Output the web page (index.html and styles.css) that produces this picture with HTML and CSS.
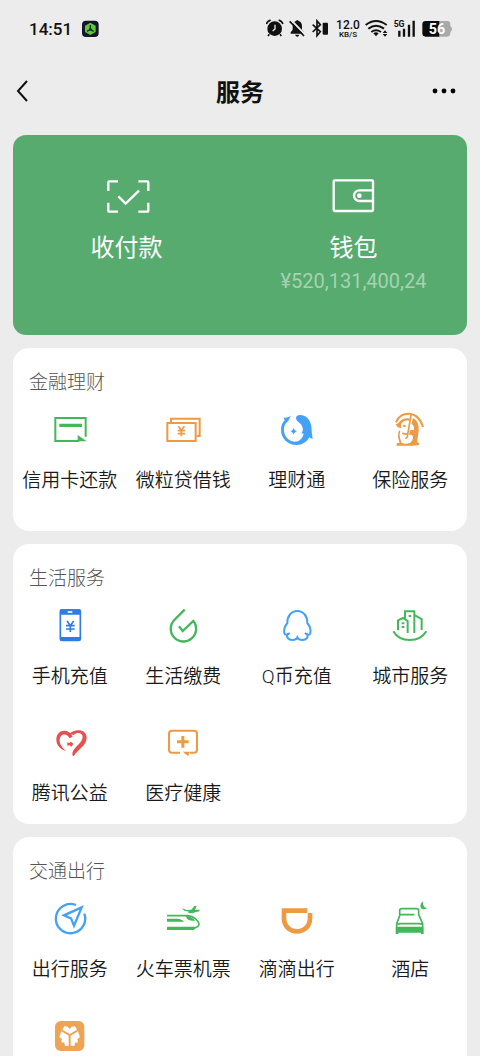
FILE: index.html
```html
<!DOCTYPE html>
<html lang="zh-CN">
<head>
<meta charset="utf-8">
<meta name="viewport" content="width=device-width, initial-scale=1">
<title>服务</title>
<link rel="stylesheet" href="styles.css">
</head>
<body>
<div class="screen">
  <div class="status">
    <div class="status-left">
      <span class="time">14:51</span>
      <svg class="w17" viewBox="243 51 51 72" aria-hidden="true"><rect x="243" y="62" width="50" height="49" rx="12" fill="#15152c"/><path d="M268 68l16 9v19l-16 9-16-9V77z" fill="#5cc83c"/><path d="M268 75v13l-10 6M268 88l10 6" fill="none" stroke="#17321c" stroke-width="4"/><circle cx="268" cy="88" r="4" fill="#17321c"/></svg>
    </div>
    <div class="status-right">
      <svg class="w18" viewBox="48 51 54 72" aria-hidden="true"><circle cx="74" cy="86" r="22" fill="#111"/><path d="M50 70q3-7 10-9M98 70q-3-7-10-9" fill="none" stroke="#111" stroke-width="5" stroke-linecap="round"/><path d="M58 103l-4 5M90 103l4 5" stroke="#111" stroke-width="5"/><path d="M75 74v13l-7 6" fill="none" stroke="#ececec" stroke-width="4"/></svg>
      <svg class="w17" viewBox="117 51 51 72" aria-hidden="true"><path d="M122 101v-4l6-8V79q1-14 11-16v-2h6v2q11 2 11 16v10l6 8v4z" fill="#111"/><path d="M135 104h13q-2 6-6 6t-7-6z" fill="#111"/><path d="M124 61l43 44" stroke="#ececec" stroke-width="6"/><path d="M119 64l43 44" stroke="#111" stroke-width="5"/></svg>
      <svg class="w20" viewBox="183 51 60 72" aria-hidden="true"><path d="M188 74l23 21-10 12V63l10 11-23 22" fill="none" stroke="#111" stroke-width="5"/><rect x="218" y="68" width="16" height="36" rx="3" fill="#111"/></svg>
      <span class="speed"><span class="speed-num">12.0</span><span class="speed-unit">KB/S</span></span>
      <svg class="w24" viewBox="345 51 72 72" aria-hidden="true"><g fill="none" stroke="#111" stroke-width="6"><path d="M347 75q31-24 63 0"/><path d="M355 86q23-18 47 0"/><path d="M364 96q14-10 29 0"/></g><path d="M370 100q8-6 16 0l-8 9z" fill="#111"/><path d="M405 91l7 8h-14zM405 110l7-8h-14z" fill="#111"/></svg>
      <svg class="w23" viewBox="432 51 69 72" aria-hidden="true"><text class="tag-5g" x="431" y="80">5G</text><path d="M448 92v18M462 86v24M477 74v36M491 62v48" stroke="#111" stroke-width="7"/></svg>
      <svg class="w31" viewBox="516 51 93 72" aria-hidden="true"><path d="M568 63h23q10 0 10 10v5q5 3 5 9t-5 9v4q0 10-10 10h-23z" fill="#a9a9a9"/><path d="M568 63h-41q-10 0-10 10v27q0 10 10 10h41z" fill="#0c0c0c"/><text class="tag-batt" x="561" y="102">56</text></svg>
    </div>
  </div>

  <header class="nav">
    <button class="nav-btn" aria-label="返回"><svg class="w24" viewBox="0 0 24 24"><path d="M19 2L10 12l9 10" fill="none" stroke="#111" stroke-width="2"/></svg></button>
    <h1 class="nav-title">服务</h1>
    <button class="nav-btn" aria-label="更多"><svg class="w24" viewBox="0 0 24 24"><circle cx="3" cy="12" r="2.4"/><circle cx="12" cy="12" r="2.4"/><circle cx="21" cy="12" r="2.4"/></svg></button>
  </header>

  <main class="content">
    <section class="wallet">
      <a class="wallet-item" href="#">
        <svg class="wallet-icon" viewBox="128 81 144 120" aria-hidden="true"><g fill="none" stroke="#fff" stroke-width="7"><path d="M144 123V97q0-3 3-3h26M234 94h27q3 0 3 3v26M264 158v24q0 3-3 3h-27M173 185h-26q-3 0-3-3v-24M174 139l22 22 40-39"/></g></svg>
        <span class="wallet-label">收付款</span>
      </a>
      <a class="wallet-item" href="#">
        <svg class="wallet-icon" viewBox="808 81 144 120" aria-hidden="true"><g fill="none" stroke="#fff" stroke-width="7"><rect x="819" y="91" width="118" height="92" rx="3"/><path d="M937 121h-41a16 16 0 0 0 0 32h41"/></g><circle cx="896" cy="137" r="7" fill="#fff"/></svg>
        <span class="wallet-label">钱包</span>
        <span class="wallet-amount">¥520,131,400,24</span>
      </a>
    </section>

    <section class="card card-roomy">
      <h2 class="card-title">金融理财</h2>
      <div class="grid">
        <a class="item" href="#"><svg class="icon green" viewBox="119 195 120 120" aria-hidden="true"><path d="M226 275V219h-91v69h72" class="line"/><path d="M147 236h68v10h-68zM202 270l27 19h-27z" class="solid"/></svg><span class="label">信用卡还款</span></a>
        <a class="item" href="#"><svg class="icon orange" viewBox="460 195 120 120" aria-hidden="true"><g class="line"><rect x="473" y="234" width="85" height="54"/><path d="M484 231v-10h86v52h-9"/><path d="M506 244l9 12 9-12M515 256v18M504 257h22M504 266h22" stroke-width="5"/></g></svg><span class="label">微粒贷借钱</span></a>
        <a class="item" href="#"><svg class="icon blue" viewBox="110 195 120 120" aria-hidden="true"><path class="solid" d="M152 212C147 219 146 224 143 229C132 237 130 249 131 258C133 277 147 289 162 290C177 290 187 280 190 266L183 265C190 257 188 247 182 238C177 232 167 228 167 219C167 212 174 209 181 210C203 212 215 232 214 258C214 266 216 272 217 283L207 277C199 291 186 300 169 300C143 300 122 281 122 254C122 241 127 232 133 226L130 218C138 218 145 216 152 212Z"/><path class="solid" d="M160 249c2 6 5 8 10 10-5 2-8 4-10 10-2-6-5-8-10-10 5-2 8-4 10-10z"/></svg><span class="label">理财通</span></a>
        <a class="item" href="#"><svg class="icon orange" viewBox="451 195 120 120" aria-hidden="true"><path class="line" d="M469 232C482 197 534 193 550 246"/><path class="line" stroke-width="5" d="M514 210l-11 65q-2 6-6 3M480 257C476 268 477 280 483 293M488 264q7 5 16 3"/><path class="solid" d="M520 219C534 226 538 240 537 255C536 272 532 284 533 291L538 295V300C516 303 490 303 470 302L472 294C478 295 481 292 481 290C488 296 500 298 510 294C521 288 522 274 517 270L508 269L511 256L523 255C524 245 521 239 515 237Z"/><path class="solid" d="M468 238C474 238 478 232 484 226C490 221 500 218 510 221L509 228C498 224 490 229 486 235C482 240 484 247 486 249C478 250 471 246 468 238Z"/><circle cx="494" cy="243" r="4" class="solid"/></svg><span class="label">保险服务</span></a>
      </div>
    </section>

    <section class="card">
      <h2 class="card-title">生活服务</h2>
      <div class="grid">
        <a class="item" href="#"><svg class="icon royal" viewBox="119 183 120 120" aria-hidden="true"><rect x="150" y="195" width="60" height="91" rx="4" class="line" stroke-width="5"/><path class="solid" d="M150 193h60v16h-60zM150 276h60v11h-60z"/><path d="M172 201h14" stroke="#fff" stroke-width="5"/><path class="line" stroke-width="5" d="M170 228l10 14 10-14M180 242v19M167 242h26M167 252h26"/></svg><span class="label">手机充值</span></a>
        <a class="item" href="#"><svg class="icon green" viewBox="460 183 120 120" aria-hidden="true"><path class="line" stroke-width="7" d="M525 194l-31 31a38 38 0 1 0 57 3l-32 30-11-14"/></svg><span class="label">生活缴费</span></a>
        <a class="item" href="#"><svg class="icon blue" viewBox="110 183 120 120" aria-hidden="true"><path class="line" d="M148 264c-5 5-10 6-14 4-4-5-5-20 7-34-1-20 12-36 30-36s31 16 30 36c12 14 11 29 7 34-4 2-9 1-14-4M143 265c-7 12 1 20 13 20 8 0 13-3 15-8 2 5 7 8 15 8 12 0 20-8 13-20"/></svg><span class="label">Q币充值</span></a>
        <a class="item" href="#"><svg class="icon green" viewBox="451 183 120 120" aria-hidden="true"><path class="line" d="M475 256v-30l15-7 14 9v36M496 220v-21h28v65M526 211l20 11v33"/><path class="line" d="M461 259c20 35 78 35 99 0"/><path class="solid" d="M507 210h7v6h-7zM486 232h8v6h-8zM486 243h8v6h-8z"/></svg><span class="label">城市服务</span></a>
        <a class="item" href="#"><svg class="icon red" viewBox="119 39 120 120" aria-hidden="true"><path class="solid" d="M187 80C176 54 138 57 138 89C138 106 151 118 168 124C155 112 147 101 148 89C149 72 170 67 177 85Z"/><path class="solid" d="M177 72C190 56 229 54 229 84C228 108 202 118 190 139L186 136C184 112 215 103 217 82C217 67 199 66 190 75Z"/><path class="solid" d="M171 97l6 2 5-4 7 6-5 9-7-4-6 1z"/></svg><span class="label">腾讯公益</span></a>
        <a class="item" href="#"><svg class="icon orange" viewBox="460 39 120 120" aria-hidden="true"><path class="line" d="M511 128h-24q-9 0-9-9V71q0-9 9-9h66q9 0 9 9v48q0 9-9 9h-13"/><path class="solid" d="M515 78h9v13h13v9h-13v13h-9v-13h-13v-9h13zM519 125h20l-3 14z"/></svg><span class="label">医疗健康</span></a>
      </div>
    </section>

    <section class="card card-last">
      <h2 class="card-title">交通出行</h2>
      <div class="grid">
        <a class="item" href="#"><svg class="icon blue" viewBox="119 177 120 120" aria-hidden="true"><path class="line" stroke-width="7" d="M197 195a44 44 0 1 0 25 26"/><path class="line" stroke-width="7" d="M214 202l-53 24 21 9 9 22z"/></svg><span class="label">出行服务</span></a>
        <a class="item" href="#"><svg class="icon green" viewBox="460 177 120 120" aria-hidden="true"><path class="line" stroke-width="5" d="M472 227h62c20 2 32 15 34 25 0 7-8 11-16 11h-80"/><path class="solid" d="M472 236h30q15 1 21 9h-51zM472 261h90l-10 9h-80zM528 227c13 1 23 7 29 15-12 1-24 0-27-10z"/><path class="solid" d="M517 205l14 5 14-1 9-11h7l-5 11 14 0-1 5-13 3-8 3-13-1 3-4-14-3z"/></svg><span class="label">火车票机票</span></a>
        <a class="item" href="#"><svg class="icon orange" viewBox="110 177 120 120" aria-hidden="true"><path class="solid" d="M124 205h77v14h15v17c0 25-20 45-46 45s-46-20-46-45zm14 14v15c0 19 13 33 32 33s32-14 32-33v-15z"/></svg><span class="label">滴滴出行</span></a>
        <a class="item" href="#"><svg class="icon green" viewBox="451 177 120 120" aria-hidden="true"><path class="line" stroke-width="5" d="M480 226v-14q0-6 6-6h45q6 0 6 6v14M482 224h42M481 224l-10 27v12M537 224l12 27v12M474 253q3-2 8-2h57q6 0 8 2"/><path class="solid" d="M468 264q0-4 6-4h72q6 0 6 4v18h-8v-4h-68v4h-8zM551 184c-3 10 1 18 11 21-10 7-20 1-20-8q1-9 9-13z"/></svg><span class="label">酒店</span></a>
        <a class="item" href="#" aria-label="更多出行"><svg class="icon orange" viewBox="119 528 120 120" aria-hidden="true"><rect class="solid" x="134" y="543" width="88" height="90" rx="17" opacity=".9"/><g fill="#fff"><path d="M178 582l-22-13 6-10 10 1 6 7 6-7 10-1 6 10z"/><path d="M175 587v30l-11 1-2-10-9-1 2-10-8-6 6-17z"/><path d="M181 587v30l11 1 2-10 9-1-2-10 8-6-6-17z"/></g></svg></a>
      </div>
    </section>
  </main>
</div>
</body>
</html>
```
FILE: styles.css
```css
* { box-sizing: border-box; }

body {
  margin: 0;
  background: #ececec;
  color: #1a1a1a;
  font-family: Roboto, "Noto Sans CJK SC", sans-serif;
}

a { color: inherit; text-decoration: none; }
h1, h2 { margin: 0; }
svg { display: block; flex: none; }

.screen {
  display: flex;
  flex-direction: column;
  height: 100vh;
  overflow: hidden;
}

/* Status bar */
.status {
  display: flex;
  flex: none;
  justify-content: space-between;
  align-items: center;
  height: 58px;
  padding: 0 27px 0 29px;
  color: #111;
}
.status-left { display: flex; align-items: center; gap: 10px; }
.status-right { display: flex; align-items: center; gap: 5px; }
.status svg { height: 24px; }
.time { font-size: 17px; font-weight: 500; }
.w17 { width: 17px; }
.w18 { width: 18px; }
.w20 { width: 20px; }
.w23 { width: 23px; }
.w24 { width: 24px; }
.w31 { width: 31px; }
.speed {
  display: flex;
  flex-direction: column;
  align-items: center;
  width: 24px;
  font-weight: 500;
}
.speed-num { font-size: 12px; line-height: 12px; }
.speed-unit { font-size: 8px; line-height: 8px; }
.tag-5g { font-size: 26px; font-weight: 700; fill: #111; }
.tag-batt { font-size: 43px; font-weight: 700; fill: #fff; text-anchor: middle; }

/* Title bar */
.nav {
  display: flex;
  flex: none;
  justify-content: space-between;
  align-items: center;
  height: 66px;
  padding: 0 24px 0 8px;
}
.nav-btn {
  display: flex;
  align-items: center;
  height: 44px;
  padding: 0;
  border: 0;
  background: none;
}
.nav-title {
  flex: 1;
  padding: 3px 0 0 16px;
  text-align: center;
  font-size: 24px;
  line-height: 32px;
  font-weight: 700;
  color: #111;
}

.content {
  display: flex;
  flex: 1;
  flex-direction: column;
  gap: 13px;
  padding: 11px 13px 0;
}

/* Wallet panel */
.wallet {
  display: grid;
  grid-template-columns: 1fr 1fr;
  flex: none;
  padding: 42px 0 40px;
  border-radius: 13px;
  background: #58ab6f;
  color: #fff;
}
.wallet-item { display: flex; flex-direction: column; align-items: center; }
.wallet-icon { width: 48px; height: 40px; margin-bottom: 15px; }
.wallet-label { font-size: 24px; line-height: 32px; }
.wallet-amount {
  padding-top: 4px;
  font-size: 20px;
  line-height: 27px;
  color: #a5d3b2;
}

/* Service cards */
.card {
  flex: none;
  padding: 21px 0 16px;
  border-radius: 16px;
  background: #fff;
}
.card-roomy { padding-bottom: 36px; }
.card-last { flex: 1 0 auto; padding-bottom: 0; border-radius: 16px 16px 0 0; }
.card-title {
  margin: 0 0 13px;
  padding: 0 16px;
  font-size: 19px;
  line-height: 28px;
  font-weight: 300;
  color: #555;
}
.grid {
  display: grid;
  grid-template-columns: repeat(4, 1fr);
  row-gap: 32px;
}
.item {
  display: flex;
  flex-direction: column;
  align-items: center;
  gap: 17px;
}
.label { font-size: 19px; line-height: 28px; font-weight: 350; white-space: nowrap; }

/* Icons */
.icon { width: 40px; height: 40px; stroke-width: 6px; }
.line { fill: none; stroke: currentColor; }
.solid { fill: currentColor; }
.green { color: #42b85a; }
.orange { color: #ec9a43; }
.blue { color: #43a2f7; }
.royal { color: #2f7ce5; }
.red { color: #e6504f; }
```
